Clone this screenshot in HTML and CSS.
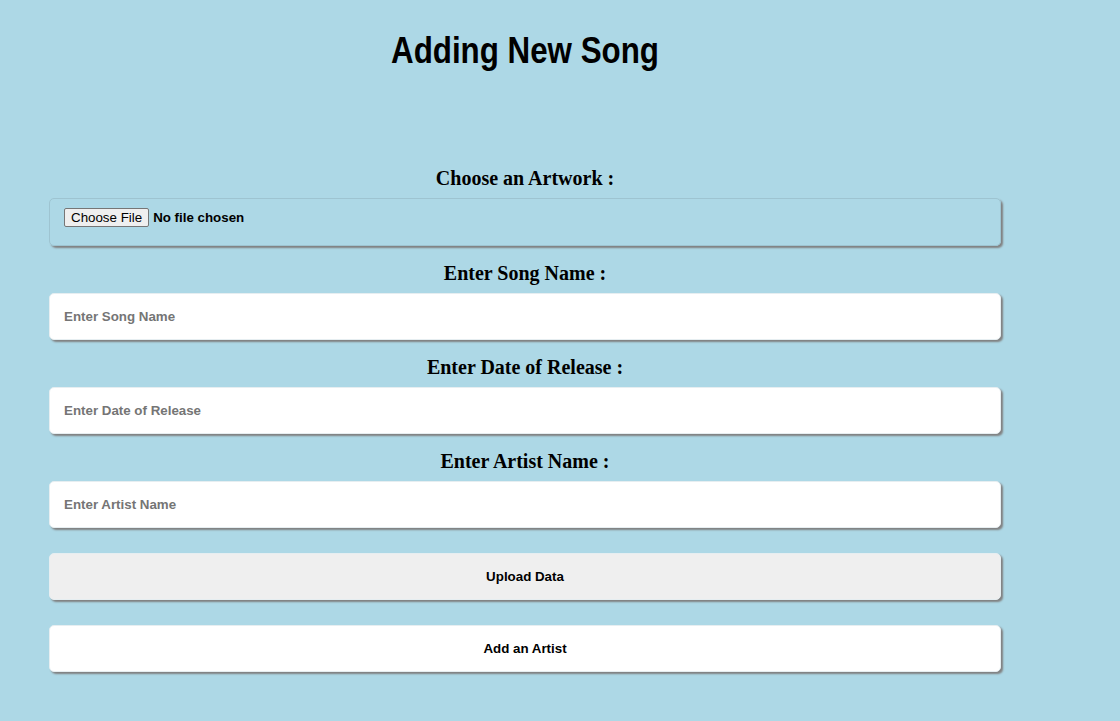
FILE: index.html
```html
<!DOCTYPE html>
<html>
<head>
<meta charset="utf-8">
<title>Adding New Song</title>
<link rel="stylesheet" href="styles.css">
</head>
<body>
<div class="page">
  <h1 class="title">Adding New Song</h1>
  <form class="song-form">
    <h3 class="field-label">Choose an Artwork :</h3>
    <input class="file-box" type="file">
    <h3 class="field-label">Enter Song Name :</h3>
    <input class="text-box" type="text" placeholder="Enter Song Name">
    <h3 class="field-label">Enter Date of Release :</h3>
    <input class="text-box" type="text" placeholder="Enter Date of Release">
    <h3 class="field-label">Enter Artist Name :</h3>
    <input class="text-box last" type="text" placeholder="Enter Artist Name">
    <button class="action upload" type="button">Upload Data</button>
    <button class="action artist" type="button">Add an Artist</button>
  </form>
</div>
</body>
</html>
```

FILE: styles.css
```css
html, body {
  margin: 0;
  padding: 0;
  background: #add8e6;
}

.page {
  width: 952px;
  margin-left: 49px;
}

.title {
  margin: 0;
  padding-top: 30px;
  height: 167px;
  box-sizing: border-box;
  text-align: center;
  font-family: "Liberation Sans", Arial, sans-serif;
  font-weight: bold;
  font-size: 36px;
  line-height: 42px;
  color: #000;
  transform: scaleX(0.87);
  transform-origin: center top;
}

.song-form {
  display: flex;
  flex-direction: column;
}

.field-label {
  margin: 0 0 9px 0;
  text-align: center;
  font-family: "Liberation Serif", serif;
  font-weight: bold;
  font-size: 20px;
  line-height: 22px;
  height: 22px;
  color: #000;
}

.file-box,
.text-box,
.action {
  box-sizing: border-box;
  width: 952px;
  border: 1px solid #9ec4d1;
  border-radius: 5px;
  box-shadow: 2px 2px 2px #808080;
  font-family: "Liberation Sans", Arial, sans-serif;
  font-size: 13.33px;
  font-weight: bold;
  margin: 0 0 16px 0;
  outline: none;
}

.file-box {
  height: 48px;
  padding: 9px 14px;
  background: transparent;
  color: #000;
}

.file-box::file-selector-button {
  font-family: "Liberation Sans", Arial, sans-serif;
  font-size: 13.33px;
  font-weight: normal;
  background: #efefef;
  border: 1px solid #767676;
  border-radius: 2px;
  padding: 1px 6px;
  margin-right: 4px;
  color: #000;
}

.text-box {
  height: 47px;
  padding: 0 14px;
  background: #fff;
  border-color: #e6eef1;
  color: #000;
}

.text-box::placeholder {
  color: #757575;
}

.text-box.last {
  margin-bottom: 25px;
}

.action {
  height: 47px;
  color: #000;
  text-align: center;
  margin-bottom: 25px;
  cursor: pointer;
  border-color: #e6eef1;
}

.upload {
  background: #efefef;
}

.artist {
  background: #fff;
}
```
